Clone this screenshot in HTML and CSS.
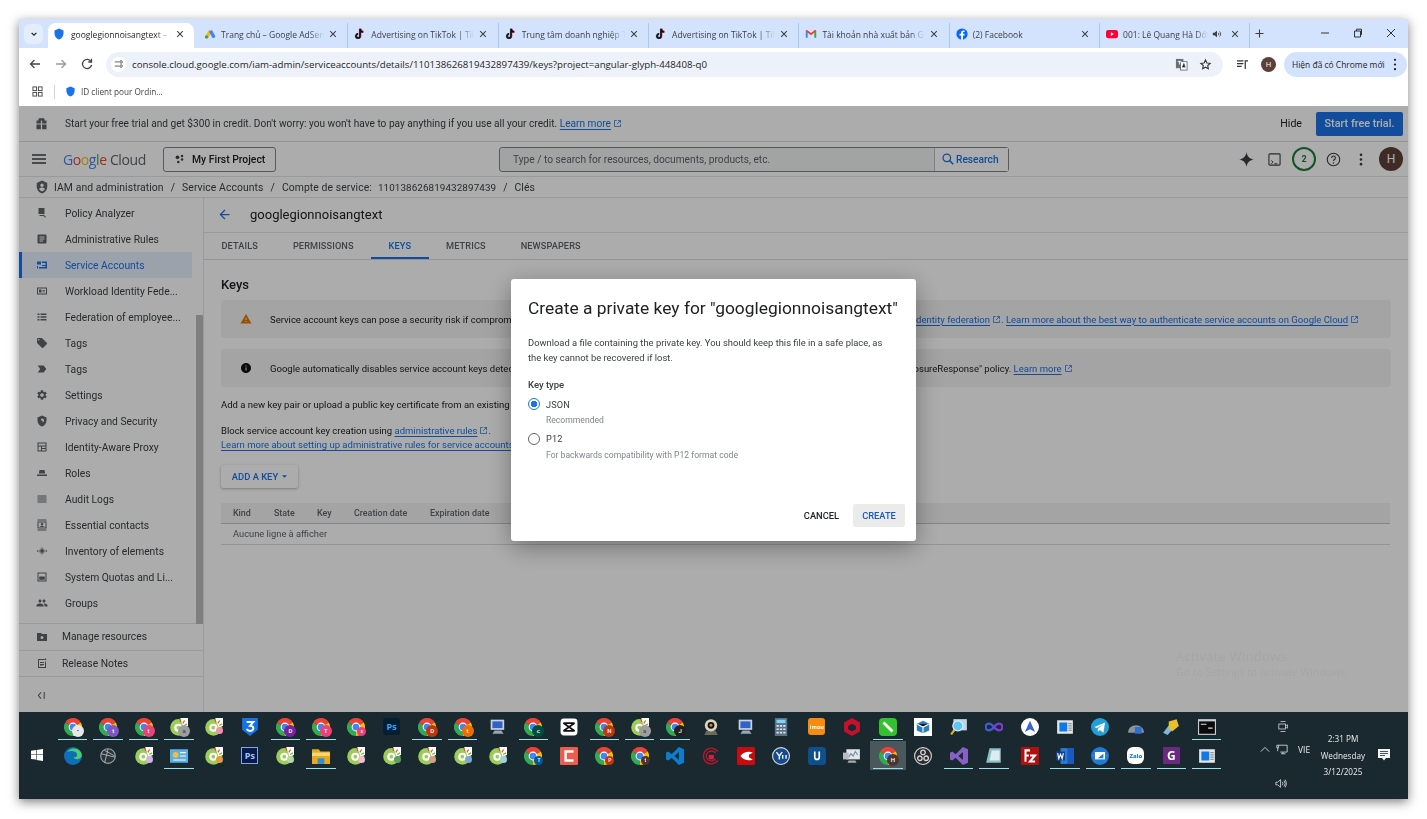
FILE: index.html
```html
<!DOCTYPE html>
<html lang="en">
<head>
<meta charset="utf-8">
<title>googlegionnoisangtext – IAM</title>
<link rel="stylesheet" href="styles.css">
</head>
<body>
<svg class="defs" aria-hidden="true">
  <symbol id="chrome" viewBox="0 0 16 16">
    <path fill="#ea4335" d="M8 8L1.07 4A8 8 0 0 1 14.93 4Z"/>
    <path fill="#fbbc04" d="M8 8L14.93 4A8 8 0 0 1 8 16Z"/>
    <path fill="#34a853" d="M8 8L8 16A8 8 0 0 1 1.07 4Z"/>
    <circle cx="8" cy="8" r="3.9" fill="#fff"/><circle cx="8" cy="8" r="3" fill="#4285f4"/>
  </symbol>
  <symbol id="coccoc" viewBox="0 0 16 16">
    <circle cx="7.6" cy="8.4" r="7.4" fill="#9ccc5a"/>
    <path fill="#fff" d="M9 0h7v7l-4 1.500z"/>
    <path stroke="#e5562a" stroke-width="1.100" d="M9.500 3.600L8.800 .8M11.400 4.800L13 2.200"/><path stroke="#7fb53c" stroke-width="1.100" d="M12.600 6.600L15.200 5.200M13 8.600h2.600"/>
    <circle cx="7.400" cy="8.600" r="3.600" fill="#fff"/><circle cx="7.400" cy="8.600" r="1.700" fill="#9ccc5a"/>
  </symbol>
  <symbol id="win" viewBox="0 0 16 16"><rect x="1" y="2" width="14" height="12" fill="#e4e7e8"/><rect x="3" y="4" width="7" height="8" fill="#0f7ae5"/><path stroke="#8a9498" d="M11 5h3M11 7h3M11 9h3M11 11h3"/></symbol>
  <symbol id="pc" viewBox="0 0 16 16"><rect x="1.500" y="1.500" width="12" height="9" fill="#c8d4e6"/><rect x="3" y="3" width="9" height="6" fill="#2f63c7"/><path fill="#9aa6b6" d="M5 11h6l2 3H3z"/></symbol>
  <symbol id="ext" viewBox="0 0 24 24"><path fill="none" stroke="currentColor" stroke-width="2" d="M10 4H4v16h16v-6M13 4h7v7M20 4L11 13"/></symbol>
  <symbol id="x" viewBox="0 0 10 10"><path fill="none" stroke="#3c4043" stroke-width="1.300" d="M1.500 1.500l7 7M8.500 1.500l-7 7"/></symbol>
  <symbol id="tt" viewBox="0 0 16 16"><path fill="none" stroke="#25f4ee" stroke-width="2.400" d="M8 1v9.600a2.700 2.700 0 1 1-2.700-2.700M8.200 1.600a4 4 0 0 0 4 3.600" transform="translate(-.6 .4)"/><path fill="none" stroke="#fe2c55" stroke-width="2.400" d="M8 1v9.600a2.700 2.700 0 1 1-2.700-2.700M8.200 1.600a4 4 0 0 0 4 3.600" transform="translate(.6 -.2)"/><path fill="none" stroke="#111" stroke-width="2.200" d="M8 1v9.600a2.700 2.700 0 1 1-2.700-2.700M8.200 1.600a4 4 0 0 0 4 3.600"/></symbol>
  <symbol id="shield" viewBox="0 0 24 24"><path d="M12 1L3 5v6c0 5.550 3.840 10.740 9 12 5.160-1.260 9-6.450 9-12V5l-9-4z"/></symbol>
  <symbol id="label" viewBox="0 0 24 24"><path d="M21.410 11.580l-9-9C12.050 2.220 11.550 2 11 2H4c-1.100 0-2 .9-2 2v7c0 .55.22 1.050.59 1.420l9 9c.36.36.86.58 1.410.58.55 0 1.050-.22 1.410-.59l7-7c.37-.36.59-.86.59-1.410 0-.55-.23-1.060-.59-1.420zM5.500 7C4.670 7 4 6.330 4 5.500S4.670 4 5.500 4 7 4.670 7 5.500 6.330 7 5.500 7z"/></symbol>
</svg>

<div class="window">
  <div class="tabstrip">
    <button class="tabsearch"><svg viewBox="0 0 10 10"><path fill="none" stroke="#1f1f1f" stroke-width="1.500" d="M2 3.500l3 3 3-3"/></svg></button>
    <div class="tab active"><svg class="fav"><use href="#shield" fill="#1a73e8"/></svg><span class="t-title">googlegionnoisangtext – IAM</span><svg class="t-x"><use href="#x"/></svg></div>
    <div class="tab"><svg class="fav" viewBox="0 0 16 16"><path fill="#fbbc04" d="M6.500 2.500l4 2.300-5 8.700-4-2.300z"/><path fill="#4285f4" d="M10.500 2.500l4.200 7.400a2.300 2.300 0 0 1-4 2.300L6.500 4.800z"/><circle cx="3.400" cy="12" r="2.300" fill="#34a853"/></svg><span class="t-title">Trang chủ – Google AdSense</span><svg class="t-x"><use href="#x"/></svg></div>
    <div class="tab"><svg class="fav"><use href="#tt"/></svg><span class="t-title">Advertising on TikTok | TikTok</span><svg class="t-x"><use href="#x"/></svg></div>
    <div class="tab"><svg class="fav"><use href="#tt"/></svg><span class="t-title">Trung tâm doanh nghiệp TikTok</span><svg class="t-x"><use href="#x"/></svg></div>
    <div class="tab"><svg class="fav"><use href="#tt"/></svg><span class="t-title">Advertising on TikTok | TikTok</span><svg class="t-x"><use href="#x"/></svg></div>
    <div class="tab"><svg class="fav" viewBox="0 0 16 16"><path fill="#4285f4" d="M1 13V4l2.600 1.800V13z"/><path fill="#34a853" d="M15 13V4l-2.600 1.800V13z"/><path fill="#ea4335" d="M1 4.200C1 2.800 2.300 2.300 3.200 3L8 6.600 12.800 3C13.700 2.300 15 2.800 15 4.200L8 9.600z"/></svg><span class="t-title">Tài khoản nhà xuất bản Google</span><svg class="t-x"><use href="#x"/></svg></div>
    <div class="tab"><svg class="fav" viewBox="0 0 16 16"><circle cx="8" cy="8" r="7.500" fill="#0866ff"/><path fill="#fff" d="M9.300 15.500V10h1.900l.3-2.300H9.300V6.400c0-.7.300-1.100 1.200-1.100h1V3.300c-.5-.1-1.100-.1-1.600-.1-1.900 0-3.100 1.100-3.100 3.100v1.400H4.700V10h2.100v5.500z"/></svg><span class="t-title">(2) Facebook</span><svg class="t-x"><use href="#x"/></svg></div>
    <div class="tab"><svg class="fav" viewBox="0 0 16 16"><rect y="2.500" width="16" height="11" rx="3" fill="#ff0033"/><path fill="#fff" d="M6.500 5.500v5L10.500 8z"/></svg><span class="t-title t-short">001: Lê Quang Hà Dớt</span><svg class="t-sound" viewBox="0 0 12 12"><path fill="#3c4043" d="M1 4.500h2L6 2v8L3 7.500H1z"/><path fill="none" stroke="#3c4043" d="M7.500 4.500a2 2 0 0 1 0 3M9 3a4 4 0 0 1 0 6"/></svg><svg class="t-x"><use href="#x"/></svg></div>
    <svg class="newtab" viewBox="0 0 10 10"><path fill="none" stroke="#3c4043" stroke-width="1.200" d="M5 .5v9M.5 5h9"/></svg>
    <div class="winctl">
      <svg viewBox="0 0 10 10"><path stroke="#333" d="M1 5h8"/></svg>
      <svg viewBox="0 0 10 10"><path fill="none" stroke="#333" d="M1.500 3h6v6h-6zM3.500 3V1.200h5v5.500H7.500"/></svg>
      <svg viewBox="0 0 10 10"><path stroke="#333" d="M1 1l8 8M9 1l-8 8"/></svg>
    </div>
  </div>

  <div class="toolbar">
    <svg class="nav-ic"><path fill="none" stroke="#444" stroke-width="1.300" d="M12 7H3M6.500 3L2.500 7l4 4"/></svg>
    <svg class="nav-ic dim"><path fill="none" stroke="#9a9a9a" stroke-width="1.300" d="M2 7h9M7.500 3l4 4-4 4"/></svg>
    <svg class="nav-ic"><path fill="none" stroke="#444" stroke-width="1.300" d="M11 4.500A4.600 4.600 0 1 0 11.600 8M11.500 1.800v3.200H8.300"/></svg>
    <div class="omnibox">
      <span class="site"><svg viewBox="0 0 12 12"><g fill="none" stroke="#444"><path d="M1 3.500h5M1 8.500h5"/><circle cx="8.500" cy="3.500" r="1.500"/><circle cx="8.500" cy="8.500" r="1.500"/></g></svg></span>
      <span class="url">console.cloud.google.com/iam-admin/serviceaccounts/details/110138626819432897439/keys?project=angular-glyph-448408-q0</span>
      <svg class="translate" viewBox="0 0 14 14"><rect x="1" y="1" width="8" height="10" fill="#6b7075"/><rect x="6" y="4" width="7" height="9" fill="#fff" stroke="#555" stroke-width=".8"/><path stroke="#fff" d="M3 4h4M5 3v4"/><path stroke="#555" d="M8 10l1.500-4 1.500 4"/></svg>
      <svg class="star" viewBox="0 0 24 24"><path fill="none" stroke="#333" stroke-width="2" d="M12 3.500l2.600 5.600 6 .7-4.500 4.100 1.200 6L12 17l-5.300 2.900 1.200-6L3.400 9.800l6-.7z"/></svg>
    </div>
    <svg class="media" viewBox="0 0 14 12"><path fill="none" stroke="#333" stroke-width="1.300" d="M1 2h7M1 5h7M1 8h5"/><path fill="none" stroke="#333" stroke-width="1.300" d="M10 11V2h3"/></svg>
    <span class="chrome-av">H</span>
    <div class="update"><span>Hiện đã có Chrome mới</span><svg viewBox="0 0 4 14"><g fill="#1f1f1f"><circle cx="2" cy="2" r="1.200"/><circle cx="2" cy="7" r="1.200"/><circle cx="2" cy="12" r="1.200"/></g></svg></div>
  </div>

  <div class="bookmarks">
    <svg class="apps" viewBox="0 0 12 12"><g fill="none" stroke="#444"><rect x="1" y="1" width="4" height="4"/><rect x="7" y="1" width="4" height="4"/><rect x="1" y="7" width="4" height="4"/><rect x="7" y="7" width="4" height="4"/></g></svg>
    <span class="bm-sep"></span>
    <svg class="bm-fav"><use href="#shield" fill="#1a73e8"/></svg>
    <span class="bm-text">ID client pour Ordin...</span>
  </div>

  <div class="console">
    <div class="promo">
      <svg class="gift" viewBox="0 0 24 24"><path fill="#5f6368" d="M20 7h-3.200c.2-.4.2-.8.2-1.200C17 4.200 15.700 3 14.200 3c-.9 0-1.600.4-2.200 1-.6-.6-1.300-1-2.200-1C8.300 3 7 4.200 7 5.800c0 .4 0 .8.2 1.200H4v5h7V7h2v5h7zM4 13.500V21h7v-7.500zm9 0V21h7v-7.500z"/></svg>
      <span class="promo-text">Start your free trial and get $300 in credit. Don't worry: you won't have to pay anything if you use all your credit. <a class="lnk">Learn more</a><svg class="ext-ic"><use href="#ext"/></svg></span>
      <span class="hide-btn">Hide</span>
      <button class="trial">Start free trial.</button>
    </div>
    <header class="topbar">
      <svg class="burger" viewBox="0 0 14 10"><path stroke="#3c4043" stroke-width="1.300" d="M0 1h14M0 5h14M0 9h14"/></svg>
      <span class="logo"><i class="g-b">G</i><i class="g-r">o</i><i class="g-y">o</i><i class="g-b">g</i><i class="g-g">l</i><i class="g-r">e</i> <span class="logo-c">Cloud</span></span>
      <button class="project"><svg viewBox="0 0 12 12"><g fill="#3c4043"><circle cx="3" cy="4" r="2.200"/><circle cx="8.500" cy="2.500" r="1.500"/><circle cx="8.500" cy="6.500" r="1.500"/><circle cx="4" cy="9.500" r="1.500"/></g></svg>My First Project</button>
      <div class="search">
        <span class="search-ph">Type / to search for resources, documents, products, etc.</span>
        <span class="search-btn"><svg viewBox="0 0 24 24"><circle cx="10" cy="10" r="6.500" fill="none" stroke="#1a73e8" stroke-width="2.200"/><path stroke="#1a73e8" stroke-width="2.600" d="M14.800 14.800L21 21"/></svg>Research</span>
      </div>
      <div class="top-icons">
        <svg class="ti" viewBox="0 0 16 16"><path fill="#3c4043" d="M8 0c.6 4.500 3 7.200 8 8-5 .8-7.400 3.500-8 8-.6-4.500-3-7.200-8-8 5-.8 7.400-3.500 8-8z"/></svg>
        <svg class="ti ti-s" viewBox="0 0 14 14"><rect x="1" y="1" width="12" height="12" rx="1" fill="none" stroke="#3c4043" stroke-width="1.200"/><path fill="none" stroke="#3c4043" d="M3.500 8l2 1.800-2 1.800M7 11.500h3"/></svg>
        <span class="notif">2</span>
        <svg class="ti" viewBox="0 0 24 24"><circle cx="12" cy="12" r="10" fill="none" stroke="#3c4043" stroke-width="1.800"/><path fill="none" stroke="#3c4043" stroke-width="1.800" d="M9 9.500a3 3 0 1 1 4.500 2.600c-1 .6-1.500 1.200-1.500 2.400"/><circle cx="12" cy="17.500" r="1.200" fill="#3c4043"/></svg>
        <svg class="ti ti-d" viewBox="0 0 4 14"><g fill="#3c4043"><circle cx="2" cy="2" r="1.400"/><circle cx="2" cy="7" r="1.400"/><circle cx="2" cy="12" r="1.400"/></g></svg>
        <span class="avatar">H</span>
      </div>
    </header>
    <nav class="crumbs">
      <svg class="crumb-ic" viewBox="0 0 24 24"><path fill="#5f6368" d="M12 1L3 5v6c0 5.550 3.840 10.740 9 12 5.160-1.260 9-6.450 9-12V5z"/><circle cx="12" cy="9" r="2.800" fill="#fff"/><path fill="#fff" d="M7 16c.8-2 2.800-3 5-3s4.200 1 5 3c-1.200 1.600-3 2.800-5 3.500-2-.7-3.800-1.900-5-3.500z"/></svg>
      <span>IAM and administration</span><b>/</b><span>Service Accounts</span><b>/</b><span>Compte de service:</span><span class="cid">110138626819432897439</span><b>/</b><span>Clés</span>
    </nav>

    <div class="body">
      <aside class="sidebar">
        <ul class="side-list">
          <li><svg class="si" viewBox="0 0 24 24"><path d="M5 2h12v12H5zM7 16h8v2H7zM15 15l5 5-1.500 1.500-5-5z"/></svg>Policy Analyzer</li>
          <li><svg class="si" viewBox="0 0 24 24"><path d="M19 3H5c-1.100 0-2 .9-2 2v14c0 1.100.9 2 2 2h14c1.100 0 2-.9 2-2V5c0-1.100-.9-2-2-2zm-5 14H7v-2h7v2zm3-4H7v-2h10v2zm0-4H7V7h10v2z"/></svg>Administrative Rules</li>
          <li class="on"><svg class="si" viewBox="0 0 24 24"><path d="M2 5h8v6H2zM12 5h10v14H6v-3h13v-2h-7v-2h7V8h-7zM2 14h2v5H2z"/></svg>Service Accounts</li>
          <li><svg class="si" viewBox="0 0 24 24"><path fill-rule="evenodd" d="M2 5h20v14H2zm2 2v10h16V7zm2 2h5v6H6zm7 1h5v1.500h-5zm0 3h5v1.500h-5z"/></svg>Workload Identity Fede...</li>
          <li><svg class="si" viewBox="0 0 24 24"><path d="M3 5h4v3H3zM9 5h12v3H9zM3 10.500h4v3H3zM9 10.500h12v3H9zM3 16h4v3H3zM9 16h12v3H9z"/></svg>Federation of employee...</li>
          <li><svg class="si"><use href="#label"/></svg>Tags</li>
          <li><svg class="si" viewBox="0 0 24 24"><path d="M3.500 18.990l11 .01c.67 0 1.270-.33 1.630-.84L20.500 12l-4.370-6.160c-.36-.51-.96-.84-1.630-.84l-11 .01L8.340 12 3.500 18.990z"/></svg>Tags</li>
          <li><svg class="si" viewBox="0 0 24 24"><path d="M19.140 12.940c.04-.3.06-.61.06-.94 0-.32-.02-.64-.07-.94l2.030-1.580c.18-.14.23-.41.12-.61l-1.920-3.320c-.12-.22-.37-.29-.59-.22l-2.390.96c-.5-.38-1.030-.7-1.620-.94l-.36-2.540c-.04-.24-.24-.41-.48-.41h-3.840c-.24 0-.43.17-.47.41l-.36 2.540c-.59.24-1.130.57-1.620.94l-2.390-.96c-.22-.08-.47 0-.59.22L2.740 8.870c-.12.21-.08.47.12.61l2.030 1.580c-.05.3-.09.63-.09.94s.02.64.07.94l-2.030 1.580c-.18.14-.23.41-.12.61l1.920 3.320c.12.22.37.29.59.22l2.390-.96c.5.38 1.030.7 1.620.94l.36 2.540c.05.24.24.41.48.41h3.840c.24 0 .44-.17.47-.41l.36-2.540c.59-.24 1.130-.56 1.620-.94l2.390.96c.22.08.47 0 .59-.22l1.920-3.320c.12-.22.07-.47-.12-.61l-2.010-1.580zM12 15.600c-1.980 0-3.600-1.620-3.600-3.600s1.620-3.600 3.600-3.600 3.600 1.620 3.600 3.600-1.620 3.600-3.600 3.600z"/></svg>Settings</li>
          <li><svg class="si" viewBox="0 0 24 24"><path fill-rule="evenodd" d="M12 1L3 5v6c0 5.550 3.840 10.740 9 12 5.160-1.260 9-6.450 9-12V5zm0 6a4 4 0 0 1 1 7.900V11h-3v-3z"/></svg>Privacy and Security</li>
          <li><svg class="si" viewBox="0 0 24 24"><path fill-rule="evenodd" d="M3 3h18v18H3zm2 2v4h14V5zm0 6v8h5v-8zm7 0v3h7v-3zm0 5v3h7v-3z"/></svg>Identity-Aware Proxy</li>
          <li><svg class="si" viewBox="0 0 24 24"><path d="M7 6h10l1.500 7h-13zM2 15h20v3H2z"/></svg>Roles</li>
          <li><svg class="si" viewBox="0 0 24 24"><path d="M3 5h18v1.800H3zM3 9h18v1.800H3zM3 13h18v1.800H3zM3 17h18v1.800H3z"/></svg>Audit Logs</li>
          <li><svg class="si" viewBox="0 0 24 24"><path fill-rule="evenodd" d="M3 1h18v2H3zM3 21h18v2H3zM3 5h18v14H3zm2 2v10h14V7zm7 1a2.500 2.500 0 1 1 0 5 2.500 2.500 0 0 1 0-5zm-5 8c.8-1.500 3-2 5-2s4.200.5 5 2z"/></svg>Essential contacts</li>
          <li><svg class="si" viewBox="0 0 24 24"><path d="M12 4l8 8-8 8-8-8z" opacity=".45"/><path d="M12 8l4 4-4 4-4-4z"/><circle cx="3" cy="12" r="1.500"/><circle cx="21" cy="12" r="1.500"/></svg>Inventory of elements</li>
          <li><svg class="si" viewBox="0 0 24 24"><path fill-rule="evenodd" d="M3 3h18v18H3zm2 2v14h14V5zm1.500 6h11v6.500h-11z"/></svg>System Quotas and Li...</li>
          <li><svg class="si" viewBox="0 0 24 24"><path d="M16 11c1.660 0 2.990-1.340 2.990-3S17.660 5 16 5c-1.660 0-3 1.340-3 3s1.340 3 3 3zm-8 0c1.660 0 2.990-1.340 2.990-3S9.660 5 8 5C6.340 5 5 6.340 5 8s1.340 3 3 3zm0 2c-2.330 0-7 1.170-7 3.500V19h14v-2.500c0-2.330-4.670-3.500-7-3.500zm8 0c-.29 0-.62.02-.97.05 1.160.84 1.970 1.970 1.970 3.450V19h6v-2.500c0-2.330-4.670-3.500-7-3.500z"/></svg>Groups</li>
        </ul>
        <span class="side-scroll"></span>
        <div class="side-foot"><svg class="si" viewBox="0 0 24 24"><path fill-rule="evenodd" d="M2 4h8l2 2h10v14H2zm10 6a3 3 0 1 0 0 6 3 3 0 0 0 0-6z"/></svg>Manage resources</div>
        <div class="side-foot"><svg class="si" viewBox="0 0 24 24"><path fill-rule="evenodd" d="M4 4h13v2H6v14h12V9h2v13H4zM8 10h8v1.800H8zM8 14h8v1.800H8zM8 18h5v-1H8zM19 2l.8 1.700 1.700.8-1.700.8L19 7l-.8-1.700-1.700-.8 1.700-.8z"/></svg>Release Notes</div>
        <div class="side-collapse"><svg viewBox="0 0 10 10"><path fill="none" stroke="#5f6368" stroke-width="1.200" d="M4.500 1.500L1.500 5l3 3.500M8 1v8"/></svg></div>
      </aside>

      <main class="main">
        <div class="title-row">
          <svg class="back" viewBox="0 0 24 24"><path fill="#1a73e8" d="M20 11H7.830l5.590-5.590L12 4l-8 8 8 8 1.410-1.410L7.830 13H20v-2z"/></svg>
          <h1>googlegionnoisangtext</h1>
        </div>
        <div class="subtabs">
          <span>DETAILS</span><span>PERMISSIONS</span><span class="sel">KEYS</span><span>METRICS</span><span>NEWSPAPERS</span>
        </div>
        <section class="content">
          <h2>Keys</h2>
          <div class="alert">
            <svg class="al-ic" viewBox="0 0 24 24"><path fill="#e37400" d="M1 21h22L12 2 1 21zm12-3h-2v-2h2v2zm0-4h-2v-4h2v4z"/></svg>
            <p>Service account keys can pose a security risk if compromised. We recommend you to avoid downloading service account keys and instead use workload <a class="lnk">identity federation</a><svg class="ext-ic"><use href="#ext"/></svg>. <a class="lnk">Learn more about the best way to authenticate service accounts on Google Cloud</a><svg class="ext-ic"><use href="#ext"/></svg></p>
          </div>
          <div class="alert">
            <svg class="al-ic" viewBox="0 0 24 24"><path fill="#111" d="M12 2C6.480 2 2 6.480 2 12s4.480 10 10 10 10-4.480 10-10S17.520 2 12 2zm1 15h-2v-6h2v6zm0-8h-2V7h2v2z"/></svg>
            <p>Google automatically disables service account keys detected in public repositories. You can customize behavior by using the "iam.serviceAccountKeyExposureResponse" policy. <a class="lnk">Learn more</a><svg class="ext-ic"><use href="#ext"/></svg></p>
          </div>
          <p class="para p-first">Add a new key pair or upload a public key certificate from an existing key pair.</p>
          <p class="para p-second">Block service account key creation using <a class="lnk">administrative rules</a><svg class="ext-ic"><use href="#ext"/></svg>.<br><a class="lnk">Learn more about setting up administrative rules for service accounts</a></p>
          <button class="addkey">ADD A KEY<svg viewBox="0 0 8 4"><path fill="#1a73e8" d="M0 0h8L4 4z"/></svg></button>
          <div class="table">
            <div class="thead"><span class="c1">Kind</span><span class="c2">State</span><span class="c3">Key</span><span class="c4">Creation date</span><span class="c5">Expiration date</span></div>
            <div class="trow">Aucune ligne à afficher</div>
          </div>
        </section>
      </main>
    </div>

    <div class="overlay">
      <div class="dialog" role="dialog">
        <h3>Create a private key for "googlegionnoisangtext"</h3>
        <p class="d-text">Download a file containing the private key. You should keep this file in a safe place, as the key cannot be recovered if lost.</p>
        <div class="d-label">Key type</div>
        <div class="radio-row"><span class="radio checked"></span><span class="r-name">JSON</span></div>
        <div class="r-desc">Recommended</div>
        <div class="radio-row second"><span class="radio"></span><span class="r-name">P12</span></div>
        <div class="r-desc">For backwards compatibility with P12 format code</div>
        <div class="d-actions"><button class="cancel">CANCEL</button><button class="create">CREATE</button></div>
      </div>
    </div>
    <div class="activate"><span class="act-1">Activate Windows</span><span class="act-2">Go to Settings to activate Windows.</span></div>
  </div>

  <footer class="taskbar">
    <svg class="start" viewBox="0 0 12 12"><path fill="#fff" d="M0 1.700L5 1v4.500H0zM5.600 .9L12 0v5.500H5.600zM0 6.100h5v4.500l-5-.7zM5.600 6.100H12V12l-6.400-.9z"/></svg>
    <div class="apps-grid">
      <span class="app run"><svg><use href="#chrome"/></svg><b class="badge bw">•</b></span>
      <span class="app run"><svg><use href="#chrome"/></svg><b class="badge" data-c="p">t</b></span>
      <span class="app run"><svg><use href="#chrome"/></svg><b class="badge" data-c="k">t</b></span>
      <span class="app run"><svg><use href="#coccoc"/></svg><b class="badge" data-c="g">a</b></span>
      <span class="app"><svg><use href="#coccoc"/></svg><b class="badge dot" data-c="lp"></b></span>
      <span class="app"><svg viewBox="0 0 16 16"><path fill="#1572e8" d="M1 0h14v10.500L8 16l-7-5.500z"/><path fill="none" stroke="#fff" stroke-width="1.700" d="M5 3.500h6L8 7c2 0 3 1 3 2.200S9.700 11.500 8 11.500 5.500 10.800 5 9.800"/></svg></span>
      <span class="app run"><svg><use href="#chrome"/></svg><b class="badge" data-c="v">D</b></span>
      <span class="app run"><svg><use href="#chrome"/></svg><b class="badge" data-c="k">T</b></span>
      <span class="app"><svg><use href="#chrome"/></svg><b class="badge small" data-c="k">x</b></span>
      <span class="app"><span class="square ps1">Ps</span></span>
      <span class="app run"><svg><use href="#chrome"/></svg><b class="badge" data-c="r">D</b></span>
      <span class="app run"><svg><use href="#chrome"/></svg><b class="badge" data-c="o">t</b></span>
      <span class="app"><svg><use href="#pc"/></svg></span>
      <span class="app run"><svg><use href="#chrome"/></svg><b class="badge" data-c="dg">c</b></span>
      <span class="app"><svg viewBox="0 0 16 16"><rect x=".5" y=".5" width="15" height="15" rx="3" fill="#fff"/><path fill="none" stroke="#111" stroke-width="1.500" d="M3 4.500l10 7M13 4.500l-10 7M3 4.500h10M3 11.500h10"/></svg></span>
      <span class="app run"><svg><use href="#chrome"/></svg><b class="badge" data-c="r">N</b></span>
      <span class="app run"><svg><use href="#coccoc"/></svg><b class="badge" data-c="g">a</b></span>
      <span class="app run"><svg><use href="#chrome"/></svg><b class="badge" data-c="bk">J</b></span>
      <span class="app"><svg viewBox="0 0 16 16"><path fill="#6b6b5a" d="M2 15h12l-2-4H4z"/><circle cx="8" cy="6.500" r="5.500" fill="#d9d3bf"/><circle cx="8" cy="6.500" r="3" fill="#111"/><circle cx="8" cy="6.500" r="1.300" fill="#d98a15"/></svg></span>
      <span class="app"><svg><use href="#pc"/></svg></span>
      <span class="app"><svg viewBox="0 0 16 16"><rect x="2.500" width="11" height="16" fill="#5b7089"/><rect x="4" y="1.500" width="8" height="3" fill="#7fd4f0"/><path stroke="#dfe7ee" stroke-width="1.500" stroke-dasharray="2 1" d="M4 7h8M4 10h8M4 13h8"/></svg></span>
      <span class="app"><span class="square imou">imou</span></span>
      <span class="app"><svg viewBox="0 0 16 16"><path fill="#c8102e" d="M8 0l7 4v8l-7 4-7-4V4z"/><path fill="#1a292f" d="M8 5l3.500 2v3L8 12l-3.500-2V7z"/></svg></span>
      <span class="app run"><svg viewBox="0 0 16 16"><rect width="16" height="16" rx="3.500" fill="#33c22e"/><path stroke="#fff" stroke-width="2.500" d="M4 4l8 8"/></svg></span>
      <span class="app"><svg viewBox="0 0 16 16"><rect width="16" height="16" fill="#fff"/><path fill="#2a7fb8" d="M8 2.500l5.500 2.500v6L8 13.500 2.500 11V5z"/><path stroke="#fff" d="M3 5.500l5 2.500 5-2.500M8 8v5"/></svg></span>
      <span class="app"><svg viewBox="0 0 16 16"><rect x="3" y="1" width="12" height="10" fill="#bcd3e8"/><circle cx="7" cy="7" r="4.500" fill="#5cc7f2" stroke="#e8eef2"/><path stroke="#e8b21e" stroke-width="2" d="M4 10.500l-3 4"/></svg></span>
      <span class="app"><svg viewBox="0 0 16 16"><path fill="none" stroke="#3a5fd0" stroke-width="2" d="M8 8c-1.500-2-3-3-4.500-3a3 3 0 0 0 0 6C5 11 6.500 10 8 8z"/><path fill="none" stroke="#7a3fd0" stroke-width="2" d="M8 8c1.500-2 3-3 4.500-3a3 3 0 0 1 0 6C11 11 9.500 10 8 8z"/></svg></span>
      <span class="app"><svg viewBox="0 0 16 16"><circle cx="8" cy="8" r="8" fill="#fff"/><path fill="#3367d6" d="M8 2.500l4.500 10-4.500-2.500-4.500 2.500z"/></svg></span>
      <span class="app"><svg><use href="#win"/></svg></span>
      <span class="app"><svg viewBox="0 0 16 16"><circle cx="8" cy="8" r="8" fill="#229ed9"/><path fill="#fff" d="M3 8l9.500-4-1.500 9-3.200-2.300-1.600 1.600-.3-2.600L11 5.500 5.300 9.200z"/></svg></span>
      <span class="app"><svg viewBox="0 0 16 16"><path fill="#8b9499" d="M1 13c0-4 3-6.500 7-6.500s7 2.500 7 6.500z"/><rect x="7" y="8" width="6" height="6" fill="#2f6fd0"/></svg></span>
      <span class="app"><svg viewBox="0 0 16 16"><path fill="#7fb8d9" d="M1 13L8 4l4 3-7 8z"/><path fill="#e8c02a" d="M6 3l7-2 2 6-6 5-3-3z"/></svg></span>
      <span class="app run"><svg viewBox="0 0 16 16"><rect y="1" width="16" height="14" fill="#c8ccce"/><rect x="1" y="3" width="14" height="11" fill="#0a0a0a"/><path stroke="#ddd" d="M2.500 5.500h5M9 9h4"/></svg></span>

      <span class="app"><svg viewBox="0 0 16 16"><circle cx="8" cy="8" r="8" fill="#0c6fb8"/><path fill="#4cd06a" d="M3 4.500C5 1 11 0 14.500 4c2 2.500 1.500 5.500-1 6.500-2.500.8-4.500-.2-5-1.500 3 .5 3.500-1.500 3-3C10.500 3.500 6 3 3 4.500z"/></svg></span>
      <span class="app"><svg viewBox="0 0 16 16"><circle cx="8" cy="8" r="6.500" fill="#2b3438" stroke="#9aa2a6"/><path fill="none" stroke="#c5cacc" stroke-width=".7" d="M2 6l12 3M8 2l-3 12M5 3l9 5"/></svg></span>
      <span class="app"><svg><use href="#coccoc"/></svg><b class="badge dot" data-c="lv"></b></span>
      <span class="app run"><svg viewBox="0 0 16 16"><rect y="2" width="16" height="12" fill="#5aaee8"/><circle cx="5" cy="7" r="2.500" fill="#f0c040"/><path stroke="#fff" d="M9 5h5M9 8h5M3 11.500h11"/></svg></span>
      <span class="app"><svg><use href="#coccoc"/></svg><b class="badge dot" data-c="o2"></b></span>
      <span class="app"><span class="square ps2">Ps</span></span>
      <span class="app"><svg><use href="#coccoc"/></svg><b class="badge dot" data-c="lg"></b></span>
      <span class="app run"><svg viewBox="0 0 16 16"><path fill="#e8a91e" d="M0 2h6l1.500 2H16v11H0z"/><path fill="#f7d774" d="M0 5h16v3H0z"/><rect x="5" y="10" width="6" height="5" fill="#2d8fd5"/></svg></span>
      <span class="app"><svg><use href="#coccoc"/></svg><b class="badge dot" data-c="lk"></b></span>
      <span class="app"><svg><use href="#coccoc"/></svg><b class="badge dot" data-c="mg"></b></span>
      <span class="app"><svg><use href="#coccoc"/></svg><b class="badge dot" data-c="br"></b></span>
      <span class="app"><svg><use href="#coccoc"/></svg><b class="badge dot" data-c="lb"></b></span>
      <span class="app"><svg><use href="#coccoc"/></svg><b class="badge dot" data-c="cy"></b></span>
      <span class="app"><svg><use href="#chrome"/></svg><b class="badge small" data-c="nb">T</b></span>
      <span class="app"><svg viewBox="0 0 16 16"><rect width="16" height="16" rx="1" fill="#ef5b4c"/><path fill="none" stroke="#fff" stroke-width="2.200" d="M12 4H5v8h7"/></svg></span>
      <span class="app"><svg><use href="#chrome"/></svg><b class="badge small" data-c="r">P</b></span>
      <span class="app"><svg><use href="#chrome"/></svg><b class="badge small" data-c="bn">t</b></span>
      <span class="app"><svg viewBox="0 0 16 16"><path fill="#0a7fd0" d="M11.500 0L16 2v12l-4.500 2L5 9.500 2 12 0 11V5l2-1 3 2.500zM11.500 4.500L7.500 8l4 3.500z"/></svg></span>
      <span class="app"><svg viewBox="0 0 16 16"><g fill="none" stroke="#b5162e" stroke-width="1.300"><path d="M14 4a7 7 0 1 0 0 8"/><path d="M12 5.500a4.500 4.500 0 1 0 0 5"/></g><rect x="6" y="7" width="4.500" height="4" fill="#d4213d"/></svg></span>
      <span class="app"><svg viewBox="0 0 16 16"><rect width="16" height="16" rx="1.500" fill="#c90a0f"/><path fill="#fff" d="M3 8c3-4 8-4.500 11-3-2 .8-3 2-3 3s1 2.200 3 3c-3 1.500-8 1-11-3z"/><circle cx="12.500" cy="8" r="2" fill="#c90a0f"/></svg></span>
      <span class="app"><svg viewBox="0 0 16 16"><circle cx="8" cy="8" r="7.500" fill="#174a8c" stroke="#d6dde2"/><path fill="none" stroke="#e8eef2" stroke-width="1.300" d="M4 4.500L6.500 8v3M9 4.500L6.500 8M9.500 7v3.500M12.500 7v3.500"/></svg></span>
      <span class="app"><svg viewBox="0 0 16 16"><rect width="16" height="16" rx="3" fill="#0f4f8c"/><path fill="none" stroke="#fff" stroke-width="1.500" d="M6 4v5a2 2 0 0 0 4 0V4"/></svg></span>
      <span class="app"><svg viewBox="0 0 16 16"><rect x="3" y="2" width="12" height="9" fill="#e3e6e8"/><path stroke="#6f8fb0" fill="none" d="M5 9l2-3 2 2 2-4 2 3"/><rect x="0" y="5" width="5" height="6" fill="#b9bec1"/><path fill="#a5abaf" d="M5 12h6l1 2H4z"/></svg></span>
      <span class="app run active"><svg><use href="#chrome"/></svg><b class="badge" data-c="bn">H</b></span>
      <span class="app"><svg viewBox="0 0 16 16"><circle cx="8" cy="8" r="7.500" fill="#2a2a2e" stroke="#d5d5d5"/><g fill="none" stroke="#d5d5d5" stroke-width="1.200"><circle cx="8" cy="4.800" r="2"/><circle cx="5.200" cy="10" r="2"/><circle cx="10.800" cy="10" r="2"/></g></svg></span>
      <span class="app run"><svg viewBox="0 0 16 16"><path fill="#8660c5" d="M11.500 0L16 2v12l-4.500 2L5 9.500 2 12 0 11V5l2-1 3 2.500zM11.500 4.500L7.500 8l4 3.500z"/></svg></span>
      <span class="app run"><svg viewBox="0 0 16 16"><path fill="#8cc0c8" d="M4 1h10v13H1z"/><path fill="#dcecef" d="M6 3h7v9H4z"/></svg></span>
      <span class="app"><svg viewBox="0 0 16 16"><rect width="16" height="16" fill="#b10f0f"/><path fill="none" stroke="#fff" stroke-width="1.800" d="M8 3H4v10M3.500 7.500h3.500M8 7.500h4.500L8 12.800h4.500"/></svg></span>
      <span class="app run"><svg viewBox="0 0 16 16"><rect x="4" y="1" width="12" height="14" fill="#2b7cd3"/><rect x="10" y="1" width="6" height="14" fill="#185abd"/><rect y="4" width="8" height="8" fill="#103f91"/><path fill="none" stroke="#fff" d="M1.500 5.500l1 5 1.500-4 1.500 4 1-5"/></svg></span>
      <span class="app run"><svg viewBox="0 0 16 16"><circle cx="8" cy="8" r="8" fill="#1f7ad6"/><rect x="3.500" y="4.500" width="9" height="6.500" fill="#fff"/><path fill="#1f7ad6" d="M6 10l5-4v4z"/></svg></span>
      <span class="app run"><span class="square zalo">Zalo</span></span>
      <span class="app run"><span class="square gg">G</span></span>
      <span class="app run"><svg><use href="#win"/></svg></span>
    </div>
    <div class="tray">
      <svg class="tray-meet" viewBox="0 0 12 14"><g fill="none" stroke="#dfe3e5" stroke-width=".9"><path d="M3 1h6M3 13h6"/><rect x="1" y="4" width="8" height="6"/><path d="M9 6l2.500-1v4L9 8"/></g></svg>
      <div class="tray-row">
        <svg viewBox="0 0 12 8" class="chev"><path fill="none" stroke="#e8ebec" d="M1 6.500L6 1.500l5 5"/></svg>
        <svg viewBox="0 0 14 12" class="net"><g fill="none" stroke="#e8ebec" stroke-width=".9"><path d="M3 1h10v8H5M8 9v2M6 11h5"/><path d="M1 1h2v3H1zM2 4v4"/></g></svg>
        <span class="lang">VIE</span>
      </div>
      <svg class="tray-vol" viewBox="0 0 14 12"><path fill="none" stroke="#e8ebec" stroke-width=".9" d="M1 4.500h2L6.500 1.500v9L3 7.500H1zM8.500 4a3 3 0 0 1 0 4M10.500 2.500a5.500 5.500 0 0 1 0 7M12 1.500a8 8 0 0 1 0 9"/></svg>
    </div>
    <div class="clock"><span>2:31 PM</span><span>Wednesday</span><span>3/12/2025</span></div>
    <svg class="notify" viewBox="0 0 12 12"><path fill="#f0f2f3" d="M0 0h12v9H8l-2 2.500L4 9H0z"/><path stroke="#1a292f" stroke-width=".8" d="M2 2.500h8M2 4.500h8M2 6.500h5"/></svg>
  </footer>
</div>
</body>
</html>
```

FILE: styles.css
```css
* { box-sizing: border-box; }
html, body { margin: 0; height: 819px; overflow: hidden; background: #fff; }
body { padding: 19px; font-family: Roboto, "Noto Sans", sans-serif; }
.defs { position: absolute; width: 0; height: 0; }
p, h1, h2, h3, ul { margin: 0; padding: 0; }
button { font-family: inherit; border: 0; padding: 0; background: none; }
svg { display: block; flex: none; }
i { font-style: normal; }

.window {
  width: 1389px; height: 780px; display: flex; flex-direction: column;
  box-shadow: 0 3px 10px rgba(0,0,0,.5); background: #fff; overflow: hidden;
  filter: blur(.4px);
}

/* Chrome tab strip */
.tabstrip { height: 29px; flex: none; background: #d3e3fd; display: flex; align-items: flex-end; font-family: "Open Sans", sans-serif; font-size: 8.5px; color: #3c4043; }
.tabsearch { width: 19px; height: 20px; margin: 0 5px 4px 5px; background: #e4edfc; border-radius: 6px; display: flex; align-items: center; justify-content: center; }
.tabsearch svg { width: 8px; height: 8px; }
.tab { width: 150.35px; height: 25px; flex: none; display: flex; align-items: center; padding: 0 0 3px 6px; border-right: 1px solid #a8c7fa; position: relative; }
.tab.active { width: 146px; margin-right: 4px; padding-left: 5px; border: 0; background: #fff; border-radius: 8px 8px 0 0; color: #1f1f1f; }
.tab.active .fav { margin-right: 6px; }
.tab.active .t-title { width: 100px; }
.tab.active .t-x { margin-left: 5px; }
.fav { width: 12px; height: 12px; margin-right: 5px; }
.t-title { width: 103px; white-space: nowrap; overflow: hidden; -webkit-mask-image: linear-gradient(90deg,#000 85%,transparent); mask-image: linear-gradient(90deg,#000 85%,transparent); }
.t-short { width: 85px; }
.t-sound { width: 10px; height: 10px; margin-left: 4px; margin-right: 4px; }
.t-x { width: 8px; height: 8px; margin-left: 5px; }
.newtab { width: 9px; height: 9px; margin: 0 0 10px 5px; }
.winctl { margin: 0 0 0 auto; display: flex; gap: 23px; padding: 0 12px 10px 0; }
.winctl svg { width: 10px; height: 10px; }

/* Chrome toolbar */
.toolbar { height: 29px; flex: none; display: flex; align-items: center; padding: 3px 1px 0 9px; background: #fff; font-family: "Open Sans", sans-serif; }
.nav-ic { width: 14px; height: 14px; margin-right: 12px; }
.nav-ic:nth-child(3) { margin-right: 11px; }
.omnibox { width: 1117px; height: 25px; margin-left: 1px; border-radius: 13px; background: #edf2fa; display: flex; align-items: center; padding: 0 10px 0 5px; }
.site { width: 15px; height: 15px; border-radius: 50%; background: #fff; display: flex; align-items: center; justify-content: center; margin-right: 6px; }
.site svg { width: 10px; height: 10px; }
.url { font-size: 9.7px; color: #1f1f1f; white-space: nowrap; }
.translate { width: 13px; height: 13px; margin-left: auto; }
.star { width: 13px; height: 13px; margin-left: 11px; margin-right: 1px; }
.media { width: 13px; height: 11px; margin-left: 13px; }
.chrome-av { width: 15px; height: 15px; margin-left: 12px; border-radius: 50%; background: #5d4037; color: #fff; font-size: 7.5px; display: flex; align-items: center; justify-content: center; }
.update { width: 123px; height: 25px; margin-left: 8px; background: #d3e3fd; border-radius: 13px; display: flex; align-items: center; padding: 0 10px 0 8px; justify-content: space-between; font-size: 8.45px; color: #1f1f1f; white-space: nowrap; }
.update svg { width: 4px; height: 13px; }

/* Bookmarks */
.bookmarks { height: 29px; flex: none; display: flex; align-items: center; padding-left: 13px; font-family: "Open Sans", sans-serif; font-size: 8.2px; color: #444; background: #fff; }
.apps { width: 11px; height: 11px; }
.bm-sep { width: 1px; height: 14px; background: #c4d7f2; margin: 0 10px 0 11px; }
.bm-fav { width: 11px; height: 13px; margin-right: 5px; }

/* Console */
.console { flex: 1; min-height: 0; position: relative; display: flex; flex-direction: column; background: #fff; color: #202124; }
.lnk { color: #1a73e8; text-decoration: underline; text-underline-offset: 2px; }
.ext-ic { display: inline-block; width: 9px; height: 9px; margin-left: 2px; vertical-align: -1px; color: #1a73e8; }

.promo { height: 36px; flex: none; display: flex; align-items: center; padding: 0 5px 0 15px; border-bottom: 1px solid #dadce0; }
.gift { width: 15px; height: 15px; margin-right: 16px; }
.promo-text { font-size: 10.15px; color: #3c4043; }
.hide-btn { margin-left: auto; font-size: 10.6px; color: #202124; }
.trial { width: 87px; height: 24px; margin-left: 14px; background: #1a73e8; color: #fff; font-size: 10.8px; font-weight: 500; border-radius: 2px; white-space: nowrap; }

.topbar { height: 35px; flex: none; display: flex; align-items: center; padding-left: 13px; border-bottom: 1px solid #e4e5e7; }
.burger { width: 14px; height: 10px; margin-right: 17px; }
.logo { width: 100px; font-family: "Open Sans", sans-serif; font-size: 14px; letter-spacing: -.4px; white-space: nowrap; }
.logo-c { color: #5f6368; }
.g-b { color: #4285f4; } .g-r { color: #ea4335; } .g-y { color: #fbbc04; } .g-g { color: #34a853; }
.project { width: 113px; height: 25px; border: 1px solid #80868b; border-radius: 3px; display: flex; align-items: center; padding-left: 11px; font-size: 10.4px; font-weight: 500; color: #202124; }
.project svg { width: 10px; height: 10px; margin-right: 7px; }
.search { width: 510px; height: 25px; margin-left: 223px; border: 1px solid #80868b; border-radius: 3px; display: flex; align-items: center; background: #f1f3f4; }
.search-ph { flex: 1; padding-left: 13px; font-size: 10.2px; color: #5f6368; }
.search-btn { width: 74px; height: 23px; background: #fff; border-left: 1px solid #bdc1c6; display: flex; align-items: center; gap: 1px; padding-left: 6px; font-size: 10.2px; font-weight: 500; color: #1a73e8; }
.search-btn svg { width: 14px; height: 14px; }
.top-icons { flex: 1; display: flex; align-items: center; padding-left: 230px; }
.ti { width: 15px; height: 15px; }
.ti-s { width: 13px; height: 13px; margin-left: 14px; }
.notif { width: 24px; height: 24px; margin: 0 10px 0 11px; border: 2px solid #188038; border-radius: 50%; display: flex; align-items: center; justify-content: center; font-size: 9px; font-weight: 700; color: #188038; }
.ti-d { width: 4px; height: 13px; margin: 0 16px 0 18px; }
.avatar { width: 24px; height: 24px; border-radius: 50%; background: #5d4037; color: #fff; display: flex; align-items: center; justify-content: center; font-size: 12px; }

.crumbs { height: 21px; flex: none; display: flex; align-items: center; padding-left: 16px; border-bottom: 1px solid #e4e5e7; font-size: 10.4px; letter-spacing: .08px; color: #3c4043; white-space: pre; }
.crumb-ic { width: 14px; height: 14px; margin-right: 5px; }
.crumbs b { font-weight: 400; margin: 0 7px; }
.cid { font-size: 9.9px; margin-left: 6px; }

.body { flex: 1; min-height: 0; display: flex; }
.sidebar { width: 185px; flex: none; border-right: 1px solid #e4e5e7; position: relative; display: flex; flex-direction: column; }
.side-list { list-style: none; height: 426px; padding-top: 2px; border-bottom: 1px solid #e4e5e7; }
.side-list li { height: 26px; display: flex; align-items: center; padding-left: 17px; font-size: 10.3px; color: #3c4043; white-space: nowrap; }
.si { width: 12px; height: 12px; margin-right: 17px; fill: #5f6368; }
.side-list li.on { width: 173px; border-left: 3px solid #1a73e8; padding-left: 14px; background: #e8f0fe; color: #1a73e8; }
.side-list li.on .si { fill: #1a73e8; }
.side-scroll { position: absolute; right: 0; top: 117px; width: 7px; height: 309px; background: #bdbdbd; }
.side-foot { height: 26.5px; flex: none; display: flex; align-items: center; padding-left: 17px; border-bottom: 1px solid #e4e5e7; font-size: 10.3px; color: #3c4043; }
.side-foot .si { margin-right: 14px; }
.side-collapse { padding: 14px 0 0 18px; }
.side-collapse svg { width: 9px; height: 9px; }

.main { flex: 1; min-width: 0; display: flex; flex-direction: column; }
.title-row { height: 35px; flex: none; display: flex; align-items: center; padding: 0 0 2px 13px; border-bottom: 1px solid #e4e5e7; }
.back { width: 15px; height: 15px; margin-right: 18px; }
.title-row h1 { font-size: 13px; font-weight: 400; color: #202124; }
.subtabs { height: 27px; flex: none; display: flex; border-bottom: 1px solid #dadce0; font-size: 9.2px; font-weight: 500; letter-spacing: .1px; color: #5f6368; }
.subtabs span { padding: 0 17.5px 2px; display: flex; align-items: center; height: 26px; }
.subtabs .sel { color: #1a73e8; box-shadow: inset 0 -2px 0 #1a73e8; }

.content { flex: 1; padding: 0 17px; }
.content h2 { font-size: 13px; font-weight: 500; color: #202124; line-height: 16px; margin-top: 17px; }
.alert { height: 38px; margin-top: 7px; border-radius: 3px; background: #f4f4f4; display: flex; align-items: center; padding-left: 19px; }
.alert + .alert { margin-top: 11px; }
.al-ic { width: 12px; height: 12px; margin-right: 18px; }
.alert p { font-size: 9.5px; white-space: nowrap; color: #202124; }
.para { font-size: 9.5px; line-height: 14px; color: #202124; white-space: nowrap; }
.p-first { margin-top: 11px; }
.p-second { margin-top: 12px; }
.addkey { width: 77px; height: 23px; margin-top: 13px; border-radius: 2px; background: #fff; box-shadow: 0 1px 3px rgba(0,0,0,.3); display: flex; align-items: center; justify-content: center; gap: 4px; font-size: 9.4px; font-weight: 500; color: #1a73e8; }
.addkey svg { width: 5px; height: 3px; }
.table { margin-top: 15px; width: 1169px; font-size: 8.9px; color: #5f6368; }
.thead { height: 21px; display: grid; grid-template-columns: 41px 43px 37px 76px 1fr; align-items: center; padding-left: 12px; background: #f4f4f4; border-bottom: 1px solid #c4c7ca; font-weight: 500; }
.trow { height: 21px; display: flex; align-items: center; padding: 0 0 2px 12px; border-bottom: 1px solid #dadce0; font-size: 9.3px; }

.activate { position: absolute; left: 1157px; top: 541px; display: flex; flex-direction: column; color: rgba(0,0,0,.05); font-family: "Open Sans", sans-serif; white-space: nowrap; z-index: 4; }
.act-1 { font-size: 13.5px; line-height: 18px; }
.act-2 { font-size: 10.5px; line-height: 14px; }

.overlay { position: absolute; inset: 0; background: rgba(0,0,0,.325); display: flex; align-items: center; justify-content: center; padding-top: 2px; z-index: 3; }
.dialog { width: 405px; height: 262px; background: #fff; border-radius: 3px; box-shadow: 0 6px 24px rgba(0,0,0,.35); padding: 19px 11px 0 17px; position: relative; display: flex; flex-direction: column; }
.dialog h3 { font-size: 17.4px; font-weight: 400; color: #202124; line-height: 21px; white-space: nowrap; }
.d-text { margin-top: 17px; padding-right: 10px; font-size: 9.4px; line-height: 14.5px; color: #3c4043; }
.d-label { margin-top: 14px; font-size: 9.5px; font-weight: 500; color: #3c4043; line-height: 12px; }
.radio-row { display: flex; align-items: center; gap: 6px; margin-top: 7px; height: 12px; }
.radio-row.second { margin-top: 6.5px; }
.radio { width: 12px; height: 12px; border: 1.3px solid #5f6368; border-radius: 50%; }
.radio.checked { border-color: #1a73e8; background: radial-gradient(circle, #1a73e8 0 3px, #fff 3.5px); }
.r-name { font-size: 9.2px; color: #3c4043; letter-spacing: .1px; }
.r-desc { margin: 4px 0 0 18px; font-size: 8.6px; line-height: 12px; color: #80868b; }
.d-actions { margin-top: auto; margin-bottom: 14px; display: flex; justify-content: flex-end; align-items: center; gap: 14px; }
.cancel, .create { font-size: 9.3px; font-weight: 500; height: 23px; border-radius: 2px; }
.cancel { color: #202124; }
.create { width: 52px; background: #ebebeb; color: #1a56c4; }

/* Windows taskbar */
.taskbar { height: 87px; flex: none; background: #1a292f; display: flex; color: #e8ebec; }
.start { width: 12px; height: 12px; margin: 37px 0 0 12px; }
.apps-grid { width: 1170px; margin-left: 12px; height: 58px; display: grid; grid-template-columns: repeat(33, 35.44px); grid-template-rows: 29px 29px; }
.app { position: relative; display: flex; align-items: center; justify-content: center; height: 29px; }
.app > svg { width: 18px; height: 18px; }
.square { width: 17px; height: 17px; }
.app.run::after { content: ""; position: absolute; left: 3px; right: 3px; bottom: 1px; height: 1px; background: #9fdfe8; }
.app.active { background: #4a585d; }
.badge { position: absolute; left: 50%; top: 50%; margin: -2px 0 0 -1px; width: 12px; height: 12px; border-radius: 50%; display: flex; align-items: center; justify-content: center; font-size: 6px; font-weight: 500; color: #fff; background: #777; }
.badge.small { width: 9px; height: 9px; margin: 0 0 0 1px; font-size: 5px; }
.badge.dot { width: 7px; height: 7px; margin: 0 0 0 2px; }
.bw { background: #e8e8e8; color: #333; }
.badge[data-c=p] { background: #7e57c2; } .badge[data-c=k] { background: #ec407a; } .badge[data-c=g] { background: #9e9e9e; color: #444; }
.badge[data-c=lp] { background: #f48fb1; } .badge[data-c=v] { background: #7b1fa2; } .badge[data-c=r] { background: #bf360c; }
.badge[data-c=o] { background: #ef6c00; } .badge[data-c=dg] { background: #004d40; } .badge[data-c=bk] { background: #212121; }
.badge[data-c=lv] { background: #d1b3ea; } .badge[data-c=o2] { background: #e89a3c; } .badge[data-c=lg] { background: #b5d8a4; }
.badge[data-c=lk] { background: #f2bdd0; } .badge[data-c=mg] { background: #5f9e63; } .badge[data-c=br] { background: #d69f8c; }
.badge[data-c=lb] { background: #7ea6dc; } .badge[data-c=cy] { background: #9fd4dc; } .badge[data-c=nb] { background: #01579b; } .badge[data-c=bn] { background: #4e342e; }
.square { display: flex; align-items: center; justify-content: center; border-radius: 2px; font-weight: 700; font-family: "Open Sans", sans-serif; }
.ps1 { background: #061e31; color: #31a8ff; font-size: 9px; border-radius: 3px; }
.ps2 { background: #0b1a4a; color: #9cc8ff; border: 1px solid #7ba9e8; font-size: 9px; border-radius: 0; }
.imou { background: #f78b0f; color: #fff; font-size: 5.5px; border-radius: 3px; }
.zalo { background: #fff; color: #0068ff; font-size: 6px; border-radius: 6px; }
.gg { background: #6b2a7f; color: #fff; font-size: 12px; border-radius: 1px; }

.tray { width: 62px; margin-left: 35px; padding-top: 8px; display: flex; flex-direction: column; align-items: flex-start; flex: none; }
.tray-meet { width: 10px; height: 13px; margin-left: 18px; }
.tray-row { display: flex; align-items: center; margin-top: 10px; height: 12px; }
.chev { width: 10px; height: 7px; }
.net { width: 12px; height: 11px; margin-left: 6px; }
.lang { font-family: "Open Sans", sans-serif; font-size: 8.5px; margin-left: 10px; }
.tray-vol { width: 12px; height: 11px; margin: 23px 0 0 15px; }
.clock { width: 56px; margin: 21px 0 0 -7px; display: flex; flex-direction: column; align-items: center; gap: 4.5px; font-family: "Open Sans", sans-serif; font-size: 8.2px; line-height: 12px; white-space: nowrap; flex: none; }
.notify { width: 12px; height: 12px; margin: 37px 0 0 7px; }
```
